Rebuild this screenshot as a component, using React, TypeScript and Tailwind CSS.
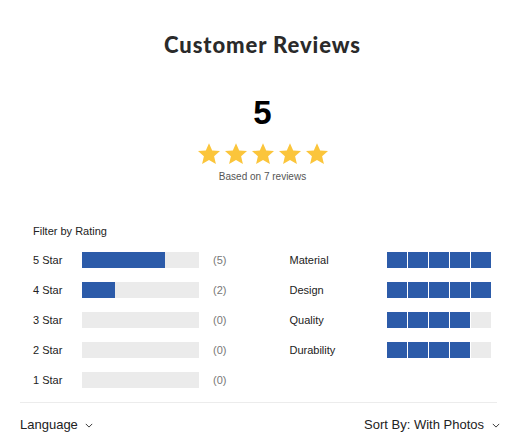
const ratingRows = [
  { label: "5 Star", count: 5, pct: 71 },
  { label: "4 Star", count: 2, pct: 28 },
  { label: "3 Star", count: 0, pct: 0 },
  { label: "2 Star", count: 0, pct: 0 },
  { label: "1 Star", count: 0, pct: 0 },
];

const attributes = [
  { label: "Material", score: 5 },
  { label: "Design", score: 5 },
  { label: "Quality", score: 4 },
  { label: "Durability", score: 4 },
];

function Star() {
  return (
    <svg viewBox="0 0 24 24" className="h-[24px] w-[24px]" fill="#fbc53b">
      <path d="M12 1.2l3.2 7.2 7.8.7-5.9 5.2 1.8 7.7L12 18l-6.9 4 1.8-7.7L1 9.1l7.8-.7z" />
    </svg>
  );
}

function Chevron() {
  return (
    <svg viewBox="0 0 10 6" className="h-[5px] w-[8px]" fill="none" stroke="#333" strokeWidth="1.2">
      <path d="M1 1l4 4 4-4" />
    </svg>
  );
}

export default function App() {
  return (
    <main className="w-[530px] h-[445px] bg-white px-5 font-['Liberation_Sans',Arial,sans-serif] text-[#222]">
      <div className="w-[485px]">
        <h1 className="pt-[31px] text-center text-[22px] leading-[27px] font-black tracking-[0.9px] text-[#2a2a2a] font-['Lato',sans-serif]">
          Customer Reviews
        </h1>

        <div className="mt-[38px] flex flex-col items-center">
          <div className="text-[33px] leading-[34px] font-bold text-black">5</div>
          <div className="mt-[12px] flex gap-[3px]">
            {Array.from({ length: 5 }, (_, i) => (
              <Star key={i} />
            ))}
          </div>
          <p className="mt-[5px] text-[10px] leading-[12px] text-[#555]">Based on 7 reviews</p>
        </div>
      </div>

      <div className="mt-[41px] pl-[13px]">
        <p className="text-[11px] leading-[14px] text-[#222]">Filter by Rating</p>
        <div className="mt-[14px] flex">
          <div className="flex flex-col gap-[14px]">
            {ratingRows.map((row) => (
              <div key={row.label} className="flex h-[16px] items-center text-[11px]">
                <span className="w-[49px]">{row.label}</span>
                <div className="h-[16px] w-[117px] bg-[#ebebeb]">
                  <div className="h-full bg-[#2c5ba9]" style={{ width: `${row.pct}%` }} />
                </div>
                <span className="ml-[14px] text-[#777]">({row.count})</span>
              </div>
            ))}
          </div>
          <div className="ml-[63px] flex flex-col gap-[14px]">
            {attributes.map((attr) => (
              <div key={attr.label} className="flex h-[16px] items-center text-[11px]">
                <span className="w-[98px]">{attr.label}</span>
                <div className="flex gap-[1px]">
                  {Array.from({ length: 5 }, (_, i) => (
                    <div
                      key={i}
                      className={i < attr.score ? "h-[16px] w-[20px] bg-[#2c5ba9]" : "h-[16px] w-[20px] bg-[#ebebeb]"}
                    />
                  ))}
                </div>
              </div>
            ))}
          </div>
        </div>
      </div>

      <div className="mt-[14px] w-[477px] border-t border-[#ececec]" />

      <div className="mt-[14px] flex w-[480px] items-center justify-between text-[13px] leading-[16px] text-[#222]">
        <button className="flex items-center gap-[7px]">
          Language <Chevron />
        </button>
        <button className="flex items-center gap-[8px]">
          Sort By: With Photos <Chevron />
        </button>
      </div>
    </main>
  );
}
